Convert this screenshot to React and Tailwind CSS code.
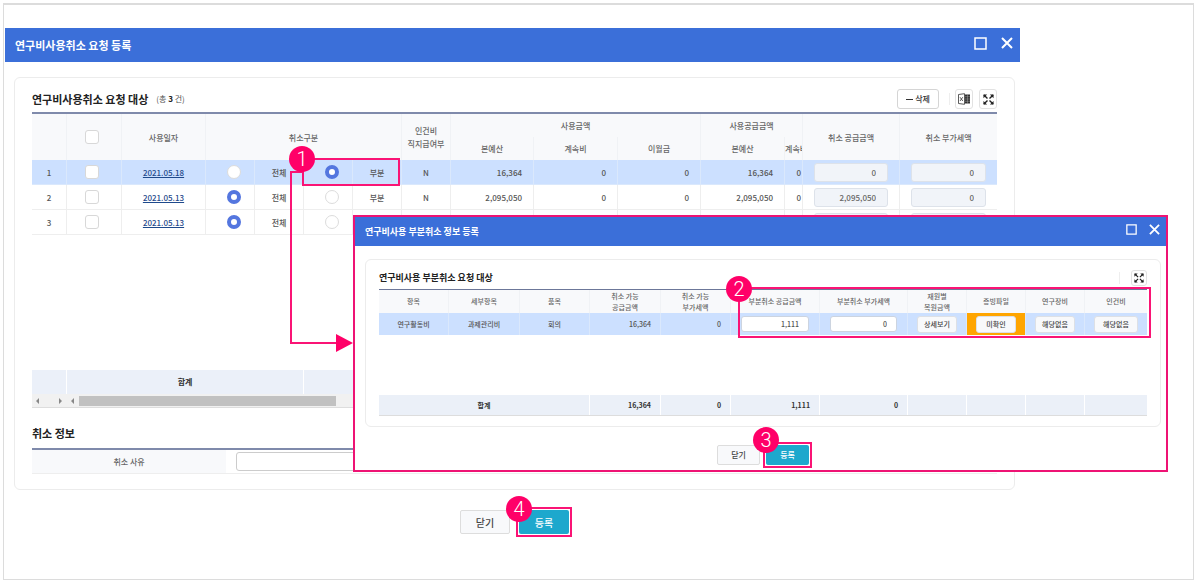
import React from 'react';
import clsx from 'clsx';

const requests = [
    { no: 1, date: '2021.05.18', type: 'partial', amount: '16,364', supply: '0', vat: '0' },
    { no: 2, date: '2021.05.13', type: 'all', amount: '2,095,050', supply: '2,095,050', vat: '0' },
    { no: 3, date: '2021.05.13', type: 'all', amount: '', supply: '', vat: '' },
];

const requestCols = [35, 55, 84, 49, 49, 49, 49, 49, 83, 84, 83, 84, 18, 97];
const partialCols = [70, 71, 70, 71, 70, 89, 88, 59, 59, 59];

const ColGroup = ({ widths }) => (
    <colgroup>
        {widths.map((width, index) => (
            <col key={index} style={{ width }} />
        ))}
        <col />
    </colgroup>
);

const Badge = ({ children, className }) => (
    <span
        className={clsx(
            "absolute z-20 flex size-[26px] items-center justify-center rounded-full bg-[#ff0068] font-['Roboto',sans-serif] text-[20px] leading-none font-light text-white",
            className
        )}
    >
        {children}
    </span>
);

const Outline = ({ className }) => (
    <span className={clsx('pointer-events-none absolute z-10 border-2 border-[#fa1475]', className)} />
);

const ExpandIcon = ({ className }) => (
    <svg viewBox="0 0 12 12" className={className} fill="#222" stroke="#222" strokeWidth="1.5">
        <path d="M1 1l3.900 3.900M11 1L7.100 4.900M1 11l3.900-3.900M11 11L7.100 7.100" />
        <path stroke="none" d="M.5.5h4l-4 4zM11.500.5h-4l4 4zM.5 11.500h4l-4-4zM11.500 11.500h-4l4-4z" />
    </svg>
);

const ExcelIcon = () => (
    <svg viewBox="0 0 12 12" className="size-3" fill="none" stroke="#333">
        <path strokeWidth=".8" d="M.5 1.500L6.500.7v10.600l-6-.8z" />
        <path strokeWidth=".8" d="M2 4.200l2.800 3.800M4.800 4.200L2 8" />
        <path fill="#333" stroke="none" d="M7 1.500h5v9H7z" />
        <path stroke="#bbb" strokeWidth=".4" d="M7 3.700h5M7 6h5M7 8.300h5M9.500 1.500v9" />
    </svg>
);

const TitleBar = ({ title, small }) => (
    <header
        className={clsx(
            'flex items-center justify-between bg-[#3b6fd9] font-bold text-white',
            small ? 'h-[29px] pr-[6px] pl-[10px] text-[9px]' : 'h-[34px] pr-[7px] pl-[10px] text-[11px]'
        )}
    >
        <h1>{title}</h1>
        <div className={clsx('flex items-center pb-1', small ? 'gap-3' : 'gap-[14px]')}>
            <button type="button" aria-label="최대화">
                <svg viewBox="0 0 13 13" className={small ? 'size-[11px]' : 'size-[13px]'} fill="none" stroke="white" strokeWidth="1.5">
                    <path d="M1 1h11v11H1z" />
                </svg>
            </button>
            <button type="button" aria-label="닫기">
                <svg viewBox="0 0 12 12" className={small ? 'size-[11px]' : 'size-3'} fill="none" stroke="white" strokeWidth="2">
                    <path d="M1 1l10 10M11 1L1 11" />
                </svg>
            </button>
        </div>
    </header>
);

const IconButton = ({ label, className, children }) => (
    <button
        type="button"
        aria-label={label}
        className={clsx('flex items-center justify-center rounded-[3px] border border-[#e2e2e2] bg-white', className)}
    >
        {children}
    </button>
);

const Radio = (props) => (
    <input
        type="radio"
        className="block size-[14px] appearance-none rounded-full border border-[#dcdcdc] bg-white checked:border-4 checked:border-[#5476df]"
        {...props}
    />
);

const Checkbox = (props) => (
    <input
        type="checkbox"
        className="block size-[14px] appearance-none rounded-[3px] border border-[#d8d8d8] bg-white checked:bg-[#5476df]"
        {...props}
    />
);

const tableClass = 'w-full table-fixed border-separate border-spacing-0';
const headClass =
    'bg-[#f8f9fb] text-[#666] [&_th]:border-r [&_th]:border-[#f0f2f5] [&_th]:p-0 [&_th]:font-medium [&_th:last-child]:border-r-0';

const RequestTable = () => (
    <div className="relative min-h-[258px]">
        <table className={clsx(tableClass, 'border-t-2 border-[#7f8aab] text-center text-[8px] leading-[13px] font-medium text-[#555]')}>
            <ColGroup widths={requestCols} />
            <thead className={headClass}>
                <tr className="h-[23px]">
                    <th rowSpan={2} />
                    <th rowSpan={2}>
                        <div className="flex justify-center pr-1">
                            <Checkbox aria-label="전체 선택" />
                        </div>
                    </th>
                    <th rowSpan={2}>사용일자</th>
                    <th rowSpan={2} colSpan={4}>취소구분</th>
                    <th rowSpan={2}>인건비<br />직지급여부</th>
                    <th colSpan={3}>사용금액</th>
                    <th colSpan={2}>사용공급금액</th>
                    <th rowSpan={2}>취소 공급금액</th>
                    <th rowSpan={2}>취소 부가세액</th>
                </tr>
                <tr className="h-[23px]">
                    <th>본예산</th>
                    <th>계속비</th>
                    <th>이월금</th>
                    <th>본예산</th>
                    <th className="overflow-hidden text-left whitespace-nowrap last:border-r!">계속비</th>
                </tr>
            </thead>
            <tbody>
                {requests.map((row) => (
                    <tr
                        key={row.no}
                        className={clsx(
                            'h-[25px] [&>td]:border-r [&>td]:border-b [&>td]:border-[#eee] [&>td]:p-0 [&>td:last-child]:border-r-0',
                            row.no === 1 && 'bg-[#cce0ff] [&>td]:border-[#dae8fc]!'
                        )}
                    >
                        <td>{row.no}</td>
                        <td>
                            <div className="flex justify-center pr-1">
                                <Checkbox aria-label={`${row.no}행 선택`} />
                            </div>
                        </td>
                        <td>
                            <a href="#" className="text-[#1f4a8c] underline">{row.date}</a>
                        </td>
                        <td>
                            <div className="flex justify-center pl-2">
                                <Radio id={`all-${row.no}`} name={`type-${row.no}`} defaultChecked={row.type === 'all'} />
                            </div>
                        </td>
                        <td><label htmlFor={`all-${row.no}`}>전체</label></td>
                        <td>
                            <div className="flex justify-center pl-2">
                                <Radio id={`partial-${row.no}`} name={`type-${row.no}`} defaultChecked={row.type === 'partial'} />
                            </div>
                        </td>
                        <td>{row.no < 3 && <label htmlFor={`partial-${row.no}`}>부분</label>}</td>
                        <td>{row.amount && 'N'}</td>
                        <td className="pr-[11px]! text-right">{row.amount}</td>
                        <td className="pr-[11px]! text-right">{row.amount && '0'}</td>
                        <td className="pr-[11px]! text-right">{row.amount && '0'}</td>
                        <td className="pr-[11px]! text-right">{row.amount}</td>
                        <td className="pr-px! text-right">{row.amount && '0'}</td>
                        <td className="px-[11px]!">
                            <input
                                aria-label="취소 공급금액"
                                readOnly
                                value={row.supply}
                                className="block h-[19px] w-full rounded-[3px] border border-[#dde2ea] bg-[#f1f4f9] pr-[11px] text-right text-[#666]"
                            />
                        </td>
                        <td className="px-[11px]!">
                            <input
                                aria-label="취소 부가세액"
                                readOnly
                                value={row.vat}
                                className="block h-[19px] w-full rounded-[3px] border border-[#dde2ea] bg-[#f1f4f9] pr-[11px] text-right text-[#666]"
                            />
                        </td>
                    </tr>
                ))}
            </tbody>
        </table>

        {/* Step 1 with the arrow to the dialog */}
        <Outline className="top-[46px] left-[270px] h-7 w-[98px]" />
        <Badge className="top-[34px] left-[257px]">1</Badge>
        <svg className="absolute top-[59px] left-[257px] z-10 h-[182px] w-16" viewBox="0 0 64 182" fill="none">
            <path d="M14 1H2V172H48" stroke="#fa1475" strokeWidth="2" />
            <path d="M47 163L64 172L47 181z" fill="#ff0068" />
        </svg>
    </div>
);

const TotalBar = () => (
    <>
        <table className={clsx(tableClass, 'bg-[#ebf0f9] text-center text-[8px] text-[#333]')}>
            <tbody>
                <tr className="h-6 [&>td]:border-r [&>td]:border-white [&>td]:p-0">
                    <td className="w-[35px]" />
                    <td className="w-[237px] font-bold">합계</td>
                    <td className="w-[98px]" />
                    <td />
                </tr>
            </tbody>
        </table>
        <div className="flex h-[14px] items-center border-b border-[#ddd] bg-[#f1f1f1] text-[#888]">
            <svg className="h-2 w-[47px]" viewBox="0 0 47 8" fill="currentColor">
                <path d="M7 1v6L4 4zM27 1v6l3-3zM42 1v6l-3-3z" />
            </svg>
            <div className="h-[10px] w-[257px] bg-[#c1c1c1]" />
        </div>
    </>
);

const SmallButton = ({ children }) => (
    <button type="button" className="block h-[17px] w-full rounded-[3px] border border-[#dde0e5] bg-[#f8f9fb] text-[7px] leading-none font-medium whitespace-nowrap text-[#444]">
        {children}
    </button>
);

const PartialDialog = () => (
    <section className="absolute top-[210px] right-[25px] left-[349px] z-30 border-2 border-[#ee1374] bg-white pb-[5px]">
        <TitleBar title="연구비사용 부분취소 정보 등록" small />
        <div className="mt-[13px] mr-[5px] ml-[10px] rounded-md border border-[#ececec] px-[13px] pb-[10px]">
            <div className="flex items-center justify-between pt-[10px] pb-[3px]">
                <h2 className="text-[9px] leading-4 font-bold text-[#222]">연구비사용 부분취소 요청 대상</h2>
                <div className="flex items-center gap-[11px]">
                    <span className="h-3 w-px bg-[#eee]" />
                    <IconButton label="확대" className="size-4">
                        <ExpandIcon className="size-[10px]" />
                    </IconButton>
                </div>
            </div>

            <div className="relative min-h-[106px]">
                <table className={clsx(tableClass, 'border-t border-[#6c7799] text-center text-[7px] leading-[11px] font-medium text-[#555]')}>
                    <ColGroup widths={partialCols} />
                    <thead className={headClass}>
                        <tr className="h-[23px]">
                            <th>항목</th>
                            <th>세부항목</th>
                            <th>품목</th>
                            <th>취소 가능<br />공급금액</th>
                            <th>취소 가능<br />부가세액</th>
                            <th>부분취소 공급금액</th>
                            <th>부분취소 부가세액</th>
                            <th>재원별<br />복원금액</th>
                            <th>증빙파일</th>
                            <th>연구장비</th>
                            <th>인건비</th>
                        </tr>
                    </thead>
                    <tbody>
                        <tr className="h-[22px] bg-[#cce0ff] [&>td]:border-r [&>td]:border-[#dae8fc] [&>td]:p-0 [&>td:last-child]:border-r-0">
                            <td>연구활동비</td>
                            <td>과제관리비</td>
                            <td>회의</td>
                            <td className="pr-[9px]! text-right">16,364</td>
                            <td className="pr-[9px]! text-right">0</td>
                            <td className="px-[10px]!">
                                <input
                                    aria-label="부분취소 공급금액"
                                    defaultValue="1,111"
                                    className="block h-4 w-full rounded-[3px] border border-[#ccd4e0] bg-white pr-[9px] text-right"
                                />
                            </td>
                            <td className="px-[10px]!">
                                <input
                                    aria-label="부분취소 부가세액"
                                    defaultValue="0"
                                    className="block h-4 w-full rounded-[3px] border border-[#ccd4e0] bg-white pr-[9px] text-right"
                                />
                            </td>
                            <td className="px-[9px]!"><SmallButton>상세보기</SmallButton></td>
                            <td className="bg-[#ffa500] px-[9px]!"><SmallButton>미확인</SmallButton></td>
                            <td className="px-[9px]!"><SmallButton>해당없음</SmallButton></td>
                            <td className="px-[9px]!"><SmallButton>해당없음</SmallButton></td>
                        </tr>
                    </tbody>
                </table>
                <Outline className="top-[-2px] right-[-4px] left-[359px] h-[51px]" />
                <Badge className="top-[-13px] left-[347px]">2</Badge>
            </div>

            <table className={clsx(tableClass, 'border-b border-[#ddd] bg-[#ebf0f8] text-[7px] font-bold text-[#333]')}>
                <ColGroup widths={partialCols} />
                <tbody>
                    <tr className="h-5 text-right [&>td]:border-r [&>td]:border-white [&>td]:py-0 [&>td]:pr-[9px] [&>td]:pl-0 [&>td:last-child]:border-r-0">
                        <td colSpan={3} className="pr-0! text-center">합계</td>
                        <td>16,364</td>
                        <td>0</td>
                        <td>1,111</td>
                        <td>0</td>
                        <td />
                        <td />
                        <td />
                        <td />
                    </tr>
                </tbody>
            </table>
        </div>

        <div className="mt-[18px] flex justify-center gap-[6px] pl-[5px] text-[8px] font-medium">
            <button type="button" className="h-5 w-[43px] rounded-[2px] border border-[#ddd] bg-[#f8f9fb] text-[#444]">닫기</button>
            <div className="relative">
                <button type="button" className="block h-5 w-[43px] rounded-[2px] bg-[#1da8cd] text-white">등록</button>
                <Outline className="-inset-[3px]" />
                <Badge className="top-[-18px] left-[-13px]">3</Badge>
            </div>
        </div>
    </section>
);

const App = () => {
    return (
        <div className="min-h-screen bg-white px-[3px] pt-[3px] pr-[6px] pb-[7px] font-['Noto_Sans_CJK_KR','Noto_Sans',sans-serif]">
            <main className="relative border border-t-2 border-[#dcdcdc] pt-[23px] pb-[45px] pl-px">
                <div className="mr-[173px]">
                    <TitleBar title="연구비사용취소 요청 등록" />

                    <div className="mt-[15px] mr-[5px] ml-[9px] rounded-md border border-[#ececec] px-[17px] pb-[15px]">
                        <div className="flex items-center justify-between pt-[11px] pb-[3px]">
                            <div className="flex items-center gap-2">
                                <h2 className="text-[11px] leading-5 font-bold text-[#222]">연구비사용취소 요청 대상</h2>
                                <span className="text-[8px] text-[#555]">(총 <b className="text-[#222]">3</b> 건)</span>
                            </div>
                            <div className="flex items-center">
                                <button type="button" className="flex h-5 w-[42px] items-center justify-center gap-[2px] rounded-[3px] border border-[#d5d5d5] bg-white text-[8px] font-medium text-[#333]">
                                    <span className="h-px w-[7px] bg-[#333]" />
                                    삭제
                                </button>
                                <span className="mr-[5px] ml-[10px] h-3 w-px bg-[#eee]" />
                                <div className="flex gap-[6px]">
                                    <IconButton label="엑셀 다운로드" className="h-5 w-[18px]">
                                        <ExcelIcon />
                                    </IconButton>
                                    <IconButton label="확대" className="h-5 w-[18px]">
                                        <ExpandIcon className="size-[11px]" />
                                    </IconButton>
                                </div>
                            </div>
                        </div>

                        <RequestTable />
                        <TotalBar />

                        <h2 className="pt-[15px] pb-[5px] text-[11px] leading-5 font-bold text-[#222]">취소 정보</h2>
                        <div className="flex items-center border-t-2 border-b border-t-[#7f8aab] border-b-[#eee] text-[8px]">
                            <label htmlFor="reason" className="w-[194px] bg-[#f8f9fb] text-center leading-[23px] font-medium text-[#666]">
                                취소 사유
                            </label>
                            <input id="reason" className="mx-[10px] h-[19px] flex-1 rounded-[3px] border border-[#ccc] px-2" />
                        </div>
                    </div>

                    <div className="mt-5 flex justify-center gap-[9px] pl-1 text-[10px] font-medium">
                        <button type="button" className="h-6 w-[50px] rounded-[2px] border border-[#ddd] bg-[#f8f9fb] text-[#444]">닫기</button>
                        <div className="relative">
                            <button type="button" className="block h-6 w-[50px] rounded-[2px] bg-[#1da8cd] text-white">등록</button>
                            <Outline className="-inset-[3px]" />
                            <Badge className="top-[-14px] left-[-13px]">4</Badge>
                        </div>
                    </div>
                </div>

                <PartialDialog />
            </main>
        </div>
    );
};

export default App;
